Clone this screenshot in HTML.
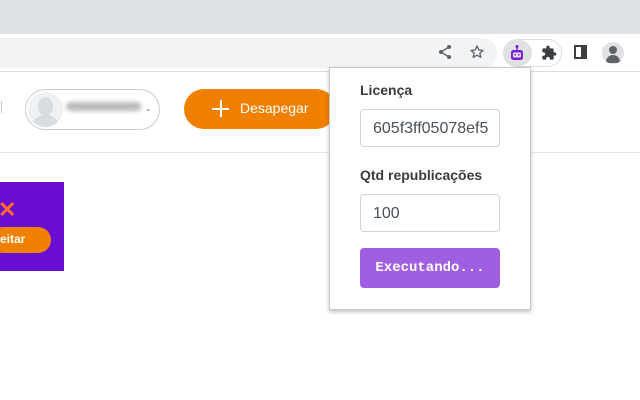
<!DOCTYPE html>
<html><head><meta charset="utf-8"><style>
*{margin:0;padding:0;box-sizing:border-box}
body{width:640px;height:400px;overflow:hidden;background:#fff;font-family:"Liberation Sans",sans-serif;position:relative}
.a{position:absolute}
</style></head><body>
<div class="a" style="left:0;top:0;width:640px;height:34px;background:#dee1e6"></div>
<div class="a" style="left:0;top:34px;width:640px;height:38px;background:#fff;border-bottom:1px solid #dadce0"></div>
<div class="a" style="left:-20px;top:38px;width:517px;height:30px;background:#f1f3f4;border-radius:15px"></div>
<!-- share -->
<svg class="a" style="left:437px;top:44px" width="16" height="16" viewBox="0 0 16 16"><circle cx="12" cy="3" r="2" fill="#5f6368"/><circle cx="4" cy="8" r="2" fill="#5f6368"/><circle cx="12" cy="13" r="2" fill="#5f6368"/><path d="M12 3L4 8L12 13" stroke="#5f6368" stroke-width="1.4" fill="none"/></svg>
<svg class="a" style="left:469px;top:44px" width="16" height="16" viewBox="0 0 24 24"><path d="M12 3l2.7 6 6.3.6-4.8 4.2 1.5 6.2L12 16.8 6.3 20l1.5-6.2L3 9.6l6.3-.6z" fill="none" stroke="#5f6368" stroke-width="2" stroke-linejoin="round"/></svg>
<div class="a" style="left:503px;top:39px;width:59px;height:28px;border:1px solid #dadce0;border-radius:14px"></div>
<div class="a" style="left:504px;top:40px;width:28px;height:26px;background:#dfe1e5;border-radius:13px"></div>
<svg class="a" style="left:508px;top:44px" width="18" height="18" viewBox="0 0 18 18"><circle cx="9" cy="2.5" r="1.5" fill="#7b1fd6"/><rect x="8.3" y="3" width="1.4" height="3" fill="#7b1fd6"/><rect x="3" y="6" width="12" height="10" rx="2.5" fill="#7b1fd6"/><rect x="5" y="8.5" width="8" height="5" rx="1" fill="#dfe1e5"/><rect x="6.5" y="10" width="1.5" height="1.5" fill="#7b1fd6"/><rect x="10" y="10" width="1.5" height="1.5" fill="#7b1fd6"/></svg>
<svg class="a" style="left:541px;top:45px" width="16" height="16" viewBox="0 0 24 24"><path d="M20.5 11H19V7a2 2 0 00-2-2h-4V3.5a2.5 2.5 0 00-5 0V5H4a2 2 0 00-2 2v3.8h1.5a2.7 2.7 0 010 5.4H2V20a2 2 0 002 2h3.8v-1.5a2.7 2.7 0 015.4 0V22H17a2 2 0 002-2v-4h1.5a2.5 2.5 0 000-5z" fill="#3c4043"/></svg>
<div class="a" style="left:574px;top:45px;width:13px;height:14px;border:2px solid #3c4043;border-right-width:6px"></div>
<div class="a" style="left:602px;top:42px;width:22px;height:22px;border-radius:50%;background:#dfe1e5;overflow:hidden"><div class="a" style="left:7px;top:4px;width:8px;height:8px;border-radius:50%;background:#5f6368"></div><div class="a" style="left:4px;top:13px;width:14px;height:8px;border-radius:7px 7px 0 0;background:#5f6368"></div></div>
<!-- page header -->
<div class="a" style="left:0;top:152px;width:640px;height:1px;background:#e5e5e5"></div>
<div class="a" style="left:-2px;top:101px;width:4px;height:12px;border-right:1px solid #999;opacity:.5"></div>
<div class="a" style="left:25px;top:89px;width:135px;height:41px;border:1px solid #ccc;border-radius:21px"></div>
<div class="a" style="left:28px;top:92px;width:35px;height:35px;border-radius:50%;background:#eef0f1;overflow:hidden"><div class="a" style="left:10px;top:5px;width:15px;height:19px;border-radius:50%;background:#d6dcdf"></div><div class="a" style="left:3px;top:23px;width:29px;height:16px;border-radius:14px 14px 0 0;background:#d6dcdf"></div></div>
<div class="a" style="left:66px;top:102px;width:75px;height:9px;background:#bbb;border-radius:4px;filter:blur(2px)"></div>
<div class="a" style="left:145px;top:104px;font-size:8px;color:#777">⌄</div>
<div class="a" style="left:184px;top:89px;width:152px;height:40px;background:#f28000;border-radius:20px"></div>
<div class="a" style="left:212px;top:100px;width:17px;height:1.5px;background:#fff;top:108px"></div>
<div class="a" style="left:220px;top:100px;width:1.5px;height:17px;background:#fff"></div>
<div class="a" style="left:240px;top:100px;color:#fff;font-size:14px">Desapegar</div>
<!-- banner -->
<div class="a" style="left:0;top:182px;width:64px;height:89px;background:#6a0dd2"></div>
<div class="a" style="left:-2px;top:197px;color:#ff6a2a;font-size:22px;font-weight:bold">✕</div>
<div class="a" style="left:-10px;top:227px;width:61px;height:26px;background:#f28000;border-radius:13px"></div>
<div class="a" style="left:0;top:232px;color:#fff;font-size:12px;font-weight:bold">eitar</div>
<!-- popup -->
<div class="a" style="left:329px;top:67px;width:202px;height:243px;background:#fff;border:1px solid #c8c8c8;box-shadow:0 2px 4px rgba(0,0,0,.25)"></div>
<div class="a" style="left:360px;top:82px;font-size:14px;font-weight:bold;color:#3c3c3c">Licença</div>
<div class="a" style="left:360px;top:109px;width:140px;height:38px;border:1px solid #ced4da;border-radius:4px;overflow:hidden;font-size:16px;color:#495057;padding:10px 0 0 12px;white-space:nowrap">605f3ff05078ef5</div>
<div class="a" style="left:360px;top:167px;font-size:14px;font-weight:bold;color:#3c3c3c">Qtd republicações</div>
<div class="a" style="left:360px;top:194px;width:140px;height:38px;border:1px solid #ced4da;border-radius:4px;font-size:16px;color:#495057;padding:10px 0 0 12px">100</div>
<div class="a" style="left:360px;top:248px;width:140px;height:40px;background:#a05ee0;border-radius:4px;color:#fff;font-family:'Liberation Mono',monospace;font-weight:bold;font-size:14px;text-align:center;line-height:40px">Executando...</div>
</body></html>
